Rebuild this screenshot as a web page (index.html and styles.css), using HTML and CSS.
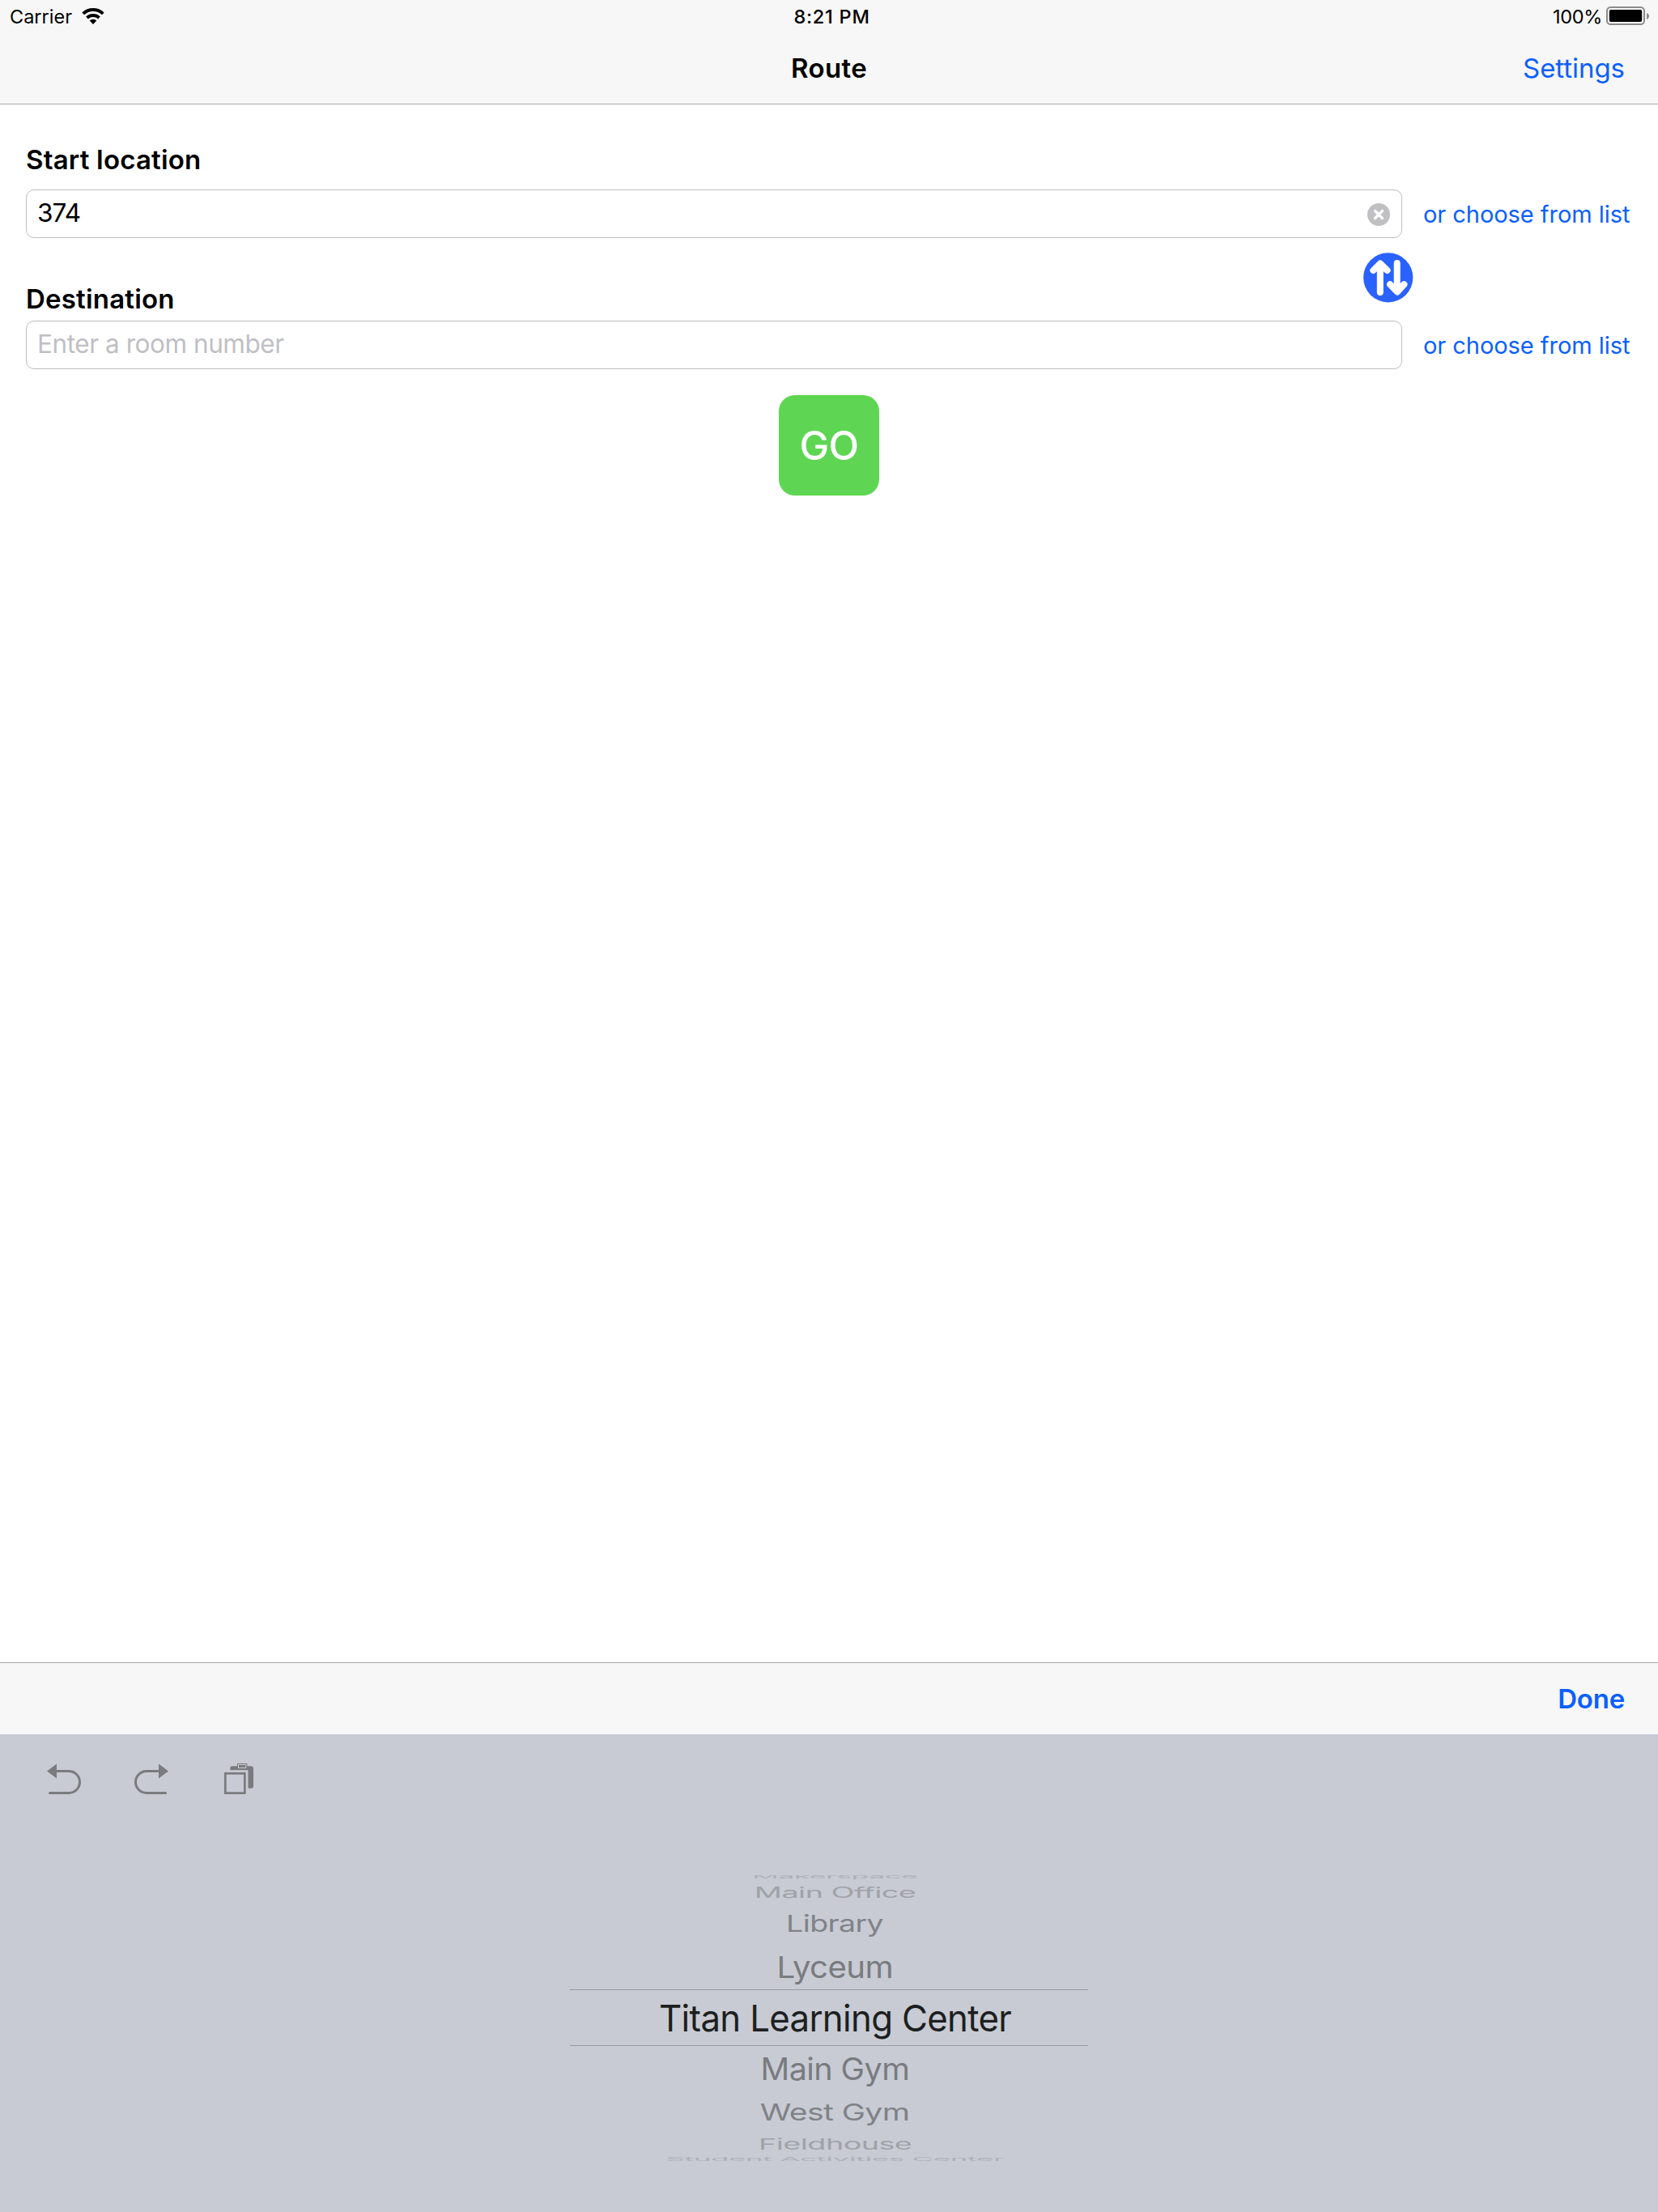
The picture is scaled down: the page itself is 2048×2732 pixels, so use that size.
FILE: index.html
```
<!DOCTYPE html>
<html lang="en">
<head>
<meta charset="utf-8">
<title>Route</title>
<link rel="stylesheet" href="styles.css">
</head>
<body>
<div class="screen">
  <header class="header">
    <div class="status">
      <div class="status-left">
        <span>Carrier</span>
        <svg width="30" height="24" viewBox="0 0 30 24" fill="none" stroke="#000" stroke-width="3.9">
          <path d="M2.7 8.8A18 18 0 0 1 27.3 8.8"/>
          <path d="M7.5 14A11 11 0 0 1 22.5 14"/>
          <path d="M15 22L10.7 17.4A6.3 6.3 0 0 1 19.3 17.4Z" fill="#000" stroke="none"/>
        </svg>
      </div>
      <span class="time">8:21 PM</span>
      <div class="status-right">
        <span class="percent">100%</span>
        <svg width="54" height="24" viewBox="0 0 54 24">
          <rect x="1" y="1" width="46" height="21" rx="4.5" fill="none" stroke="#8b8b8b" stroke-width="2"/>
          <rect x="3.8" y="4" width="40.4" height="15" rx="2" fill="#000"/>
          <path d="M50 8C54 9.500 54 14.500 50 16Z" fill="#8b8b8b"/>
        </svg>
      </div>
    </div>
    <nav class="nav">
      <h1 class="title">Route</h1>
      <a class="settings">Settings</a>
    </nav>
  </header>

  <main class="form">
    <h2 class="label label-start">Start location</h2>
    <div class="row">
      <div class="field">
        <span class="value">374</span>
        <svg class="clear" width="28" height="28" viewBox="0 0 28 28">
          <circle cx="14" cy="14" r="14" fill="#c0c0c2"/>
          <path d="M9.500 9.500L18.500 18.500M18.500 9.500L9.500 18.500" stroke="#fff" stroke-width="3.200" stroke-linecap="round"/>
        </svg>
      </div>
      <a class="choose">or choose from list</a>
    </div>
    <div class="between">
      <h2 class="label label-dest">Destination</h2>
      <svg width="62" height="62" viewBox="0 0 62 62" fill="none" stroke="#fff" stroke-width="8" stroke-linecap="round" stroke-linejoin="round">
        <circle cx="30.700" cy="30.800" r="30.600" fill="#2a62ff" stroke="none"/>
        <path d="M20.800 49V14M12.300 22L20.800 13.500L29.600 22L20.800 14.500"/>
        <path d="M41.700 13V48M33 39.200L41.900 48.600L50.400 39.200L41.900 47.500"/>
      </svg>
    </div>
    <div class="row">
      <div class="field"><span class="placeholder">Enter a room number</span></div>
      <a class="choose">or choose from list</a>
    </div>
    <button class="go">GO</button>
  </main>

  <div class="toolbar"><a class="done">Done</a></div>

  <section class="keyboard">
    <div class="shortcuts">
      <svg class="undo" width="48" height="42" viewBox="0 0 48 42">
        <path d="M12 11.500H29A13.500 13.500 0 0 1 29 38.500H5.500" fill="none" stroke="#797b7e" stroke-width="3" stroke-linecap="round"/>
        <path d="M2 11.500L14 2.500V20.500Z" fill="#797b7e"/>
      </svg>
      <svg class="redo" width="48" height="42" viewBox="0 0 48 42">
        <path d="M34 11.500H17A13.500 13.500 0 0 0 17 38.500H40.500" fill="none" stroke="#797b7e" stroke-width="3" stroke-linecap="round"/>
        <path d="M44 11.500L32 2.500V20.500Z" fill="#797b7e"/>
      </svg>
      <svg width="40" height="42" viewBox="0 0 40 42">
        <path d="M8.300 10.300V8Q8.300 5.300 11 5.300H33.500Q37 5.300 37 8.500V30Q37 32.700 34.500 32.700H30.500V10.300Z" fill="#797b7e"/>
        <rect x="17" y="2" width="12.300" height="6.800" fill="#797b7e"/>
        <rect x="18.500" y="3.500" width="9.300" height="4" fill="none" stroke="#c8cbd4" stroke-width="1"/>
        <rect x="2.300" y="14.300" width="24" height="24.300" fill="none" stroke="#797b7e" stroke-width="2.700"/>
      </svg>
    </div>
    <ul class="picker">
      <li class="edge-top"><span>Makerspace</span></li>
      <li class="far office"><span>Main Office</span></li>
      <li class="mid library"><span>Library</span></li>
      <li class="near lyceum"><span>Lyceum</span></li>
      <li class="selected"><span>Titan Learning Center</span></li>
      <li class="near main-gym"><span>Main Gym</span></li>
      <li class="mid west-gym"><span>West Gym</span></li>
      <li class="far fieldhouse"><span>Fieldhouse</span></li>
      <li class="edge-bottom"><span>Student Activities Center</span></li>
    </ul>
  </section>
</div>
</body>
</html>
```
FILE: styles.css
```
* { box-sizing: border-box; margin: 0; padding: 0; }
body { font-family: Inter, "Liberation Sans", sans-serif; color: #000; background: #fff; }
svg { display: block; flex: none; }
.screen { width: 2048px; height: 2732px; display: flex; flex-direction: column; overflow: hidden; }

.header { height: 129px; background: #f7f7f7; border-bottom: 1px solid #a7a7a7; }
.status { height: 40px; display: grid; grid-template-columns: 1fr auto 1fr; font-size: 23.5px; line-height: 42px; }
.status svg { margin-bottom: 2px; }
.status-left { display: flex; align-items: center; gap: 11px; padding-left: 12px; }
.time { font-weight: 550; letter-spacing: 0.75px; padding-left: 7px; }
.status-right { display: flex; align-items: center; justify-content: flex-end; gap: 5px; padding-right: 10px; }
.percent { letter-spacing: -0.3px; }

.nav { height: 88px; display: grid; grid-template-columns: 1fr auto 1fr; align-items: center; font-size: 33px; line-height: 88px; }
.title { grid-column: 2; font-size: inherit; font-weight: 580; letter-spacing: 0.35px; }
.settings { justify-self: end; padding-right: 41px; letter-spacing: -0.05px; color: #0a60ff; }

.form { flex: 1; padding: 48px 32px 0; display: flex; flex-direction: column; }
.label { font-size: 33px; font-weight: 580; line-height: 40px; letter-spacing: 0.2px; }
.label-start { margin-bottom: 17px; }
.row { display: flex; align-items: center; gap: 26px; }
.field { width: 1700px; height: 60px; border: 1px solid #bebebe; border-radius: 10px; padding: 0 14px 0 13px; display: flex; align-items: center; justify-content: space-between; }
.value, .placeholder { font-size: 31.5px; line-height: 55px; padding-bottom: 3px; }
.value { letter-spacing: -0.9px; }
.placeholder { letter-spacing: -0.44px; color: #bfbfc5; }
.clear { margin-top: 2px; }
.choose { height: 60px; font-size: 29px; line-height: 62px; letter-spacing: -0.05px; color: #0a60ff; white-space: nowrap; }
.between { height: 102px; display: flex; justify-content: space-between; align-items: flex-start; padding: 18px 270px 0 0; }
.label-dest { margin-top: 37px; }
.go { align-self: center; margin-top: 32px; width: 124px; height: 124px; border: 0; border-radius: 20px; padding-top: 1px; background: #5ed653; color: #fff; font: 550 49px/123px Inter, "Liberation Sans", sans-serif; letter-spacing: -0.5px; }

.toolbar { height: 89px; background: #f7f7f7; border-top: 1px solid #a7a7a7; padding-right: 41px; text-align: right; }
.done { font-size: 33px; font-weight: 580; line-height: 88px; letter-spacing: -0.2px; color: #0a60ff; }

.keyboard { height: 590px; background: #c8cbd4; display: flex; flex-direction: column; align-items: center; }
.shortcuts { align-self: stretch; height: 169px; padding: 34px 56px; display: flex; }
.undo { margin-right: 60px; }
.redo { margin-right: 64px; }

.picker { width: 640px; list-style: none; font-size: 45px; letter-spacing: -0.7px; text-align: center; white-space: nowrap; }
.picker li { padding-left: 15px; }
.picker span { display: inline-block; }
.selected { height: 70px; line-height: 70px; color: #1d1f20; border: solid #989ba3; border-width: 1px 0; }
.near { height: 56px; line-height: 58px; color: #797b7f; }
.mid { height: 51px; line-height: 52px; color: #808287; }
.far { height: 26px; line-height: 28px; color: #a0a2a8; }
.edge-top, .edge-bottom { height: 13px; line-height: 13px; color: #adb0b7; }
.edge-top { clip-path: inset(5px 0 0 0); }
.edge-bottom { clip-path: inset(0 0 4px 0); }
.edge-top span { transform: scale(0.801, 0.15); }
.office span { transform: scale(0.841, 0.403); }
.library span { transform: scale(0.833, 0.645); }
.lyceum span { transform: scale(0.894, 0.83); }
.selected span { transform: scale(0.973, 1); }
.main-gym span { transform: scale(0.88, 0.84); }
.west-gym span { transform: scale(0.871, 0.645); }
.fieldhouse span { transform: scale(0.84, 0.41); }
.edge-bottom span { transform: scale(0.819, 0.15); }
```
